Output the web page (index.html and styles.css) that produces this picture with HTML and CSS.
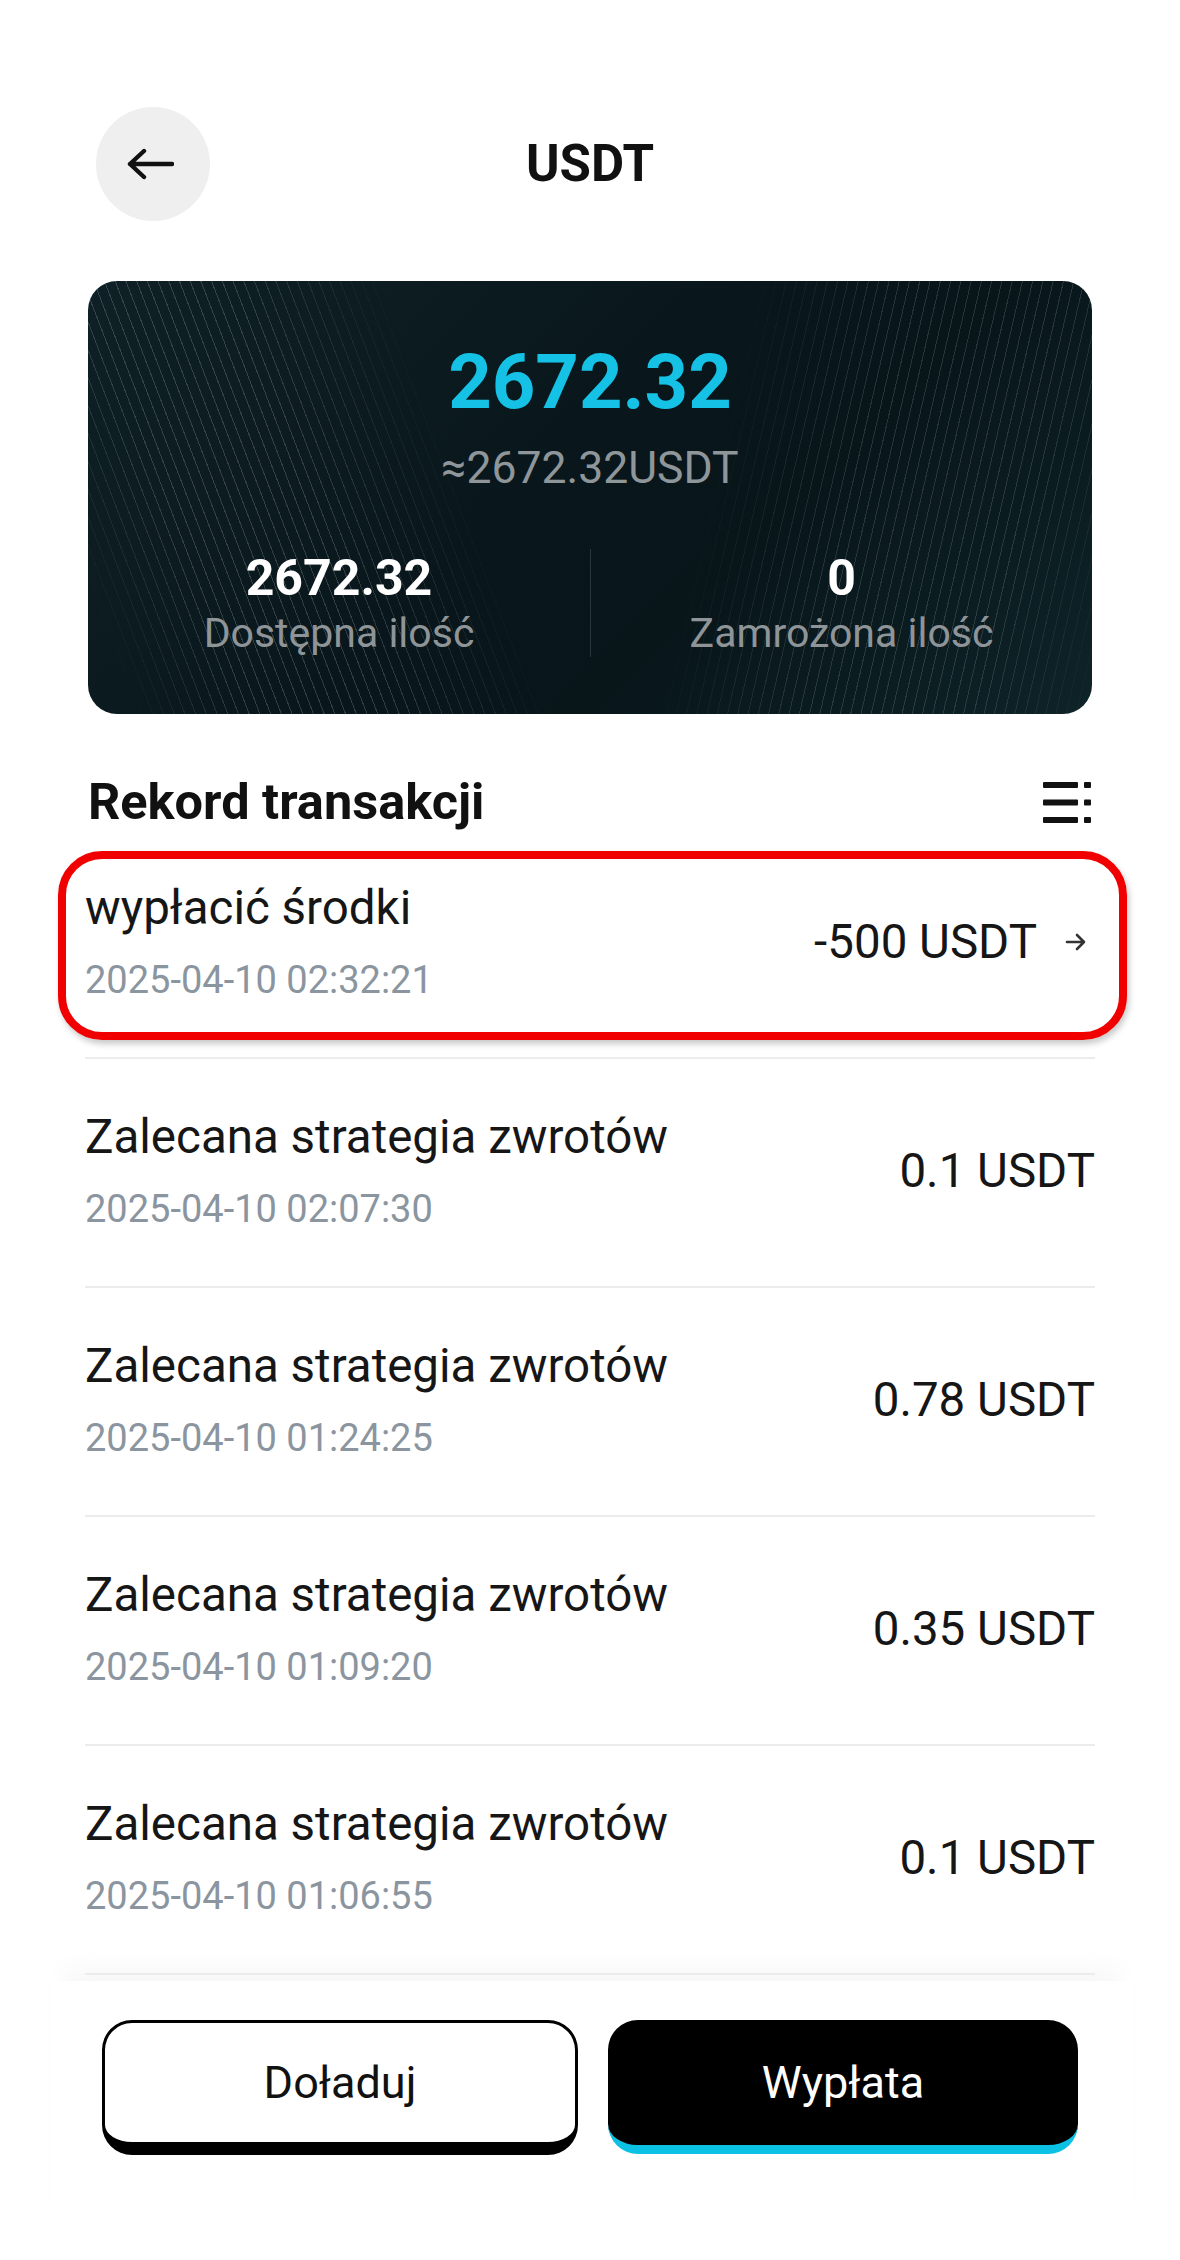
FILE: index.html
```html
<!DOCTYPE html>
<html lang="pl">
<head>
    <meta charset="UTF-8">
    <meta name="viewport" content="width=device-width, initial-scale=1.0">
    <title>USDT</title>
    <link rel="stylesheet" href="styles.css">
</head>
<body>

    <header class="top-bar">
        <button class="back-btn" aria-label="Wstecz">
            <svg width="48" height="32" viewBox="0 0 48 32">
                <path d="M46 16H4M18 3L4 16l14 13" fill="none" stroke="#111" stroke-width="4.4" stroke-linecap="round" stroke-linejoin="round"/>
            </svg>
        </button>
        <h1 class="page-title">USDT</h1>
        <span></span>
    </header>

    <section class="balance-card">
        <div class="balance-main">2672.32</div>
        <div class="balance-sub">≈2672.32USDT</div>
        <div class="balance-stats">
            <div class="stat">
                <div class="stat-value">2672.32</div>
                <div class="stat-label">Dostępna ilość</div>
            </div>
            <div class="stat stat-split">
                <div class="stat-value">0</div>
                <div class="stat-label">Zamrożona ilość</div>
            </div>
        </div>
    </section>

    <div class="section-head">
        <h2>Rekord transakcji</h2>
        <svg class="filter-icon" width="48" height="41" viewBox="0 0 48 41">
            <rect x="0" y="0" width="35" height="6" rx="1"/>
            <rect x="41" y="0" width="7" height="6" rx="1"/>
            <rect x="0" y="17.5" width="35" height="6" rx="1"/>
            <rect x="41" y="17.5" width="7" height="6" rx="1"/>
            <rect x="0" y="35" width="35" height="6" rx="1"/>
            <rect x="41" y="35" width="7" height="6" rx="1"/>
        </svg>
    </div>

    <ul class="tx-list">
        <li class="tx-row highlighted">
            <div class="tx-info">
                <div class="tx-title">wypłacić środki</div>
                <div class="tx-date">2025-04-10 02:32:21</div>
            </div>
            <div class="tx-amount">
                -500 USDT
                <svg width="22" height="18" viewBox="0 0 22 18">
                    <path d="M2 9h17M12 2l7 7-7 7" fill="none" stroke="#333" stroke-width="2.6" stroke-linecap="round" stroke-linejoin="round"/>
                </svg>
            </div>
        </li>
        <li class="tx-row">
            <div class="tx-info">
                <div class="tx-title">Zalecana strategia zwrotów</div>
                <div class="tx-date">2025-04-10 02:07:30</div>
            </div>
            <div class="tx-amount">0.1 USDT</div>
        </li>
        <li class="tx-row">
            <div class="tx-info">
                <div class="tx-title">Zalecana strategia zwrotów</div>
                <div class="tx-date">2025-04-10 01:24:25</div>
            </div>
            <div class="tx-amount">0.78 USDT</div>
        </li>
        <li class="tx-row">
            <div class="tx-info">
                <div class="tx-title">Zalecana strategia zwrotów</div>
                <div class="tx-date">2025-04-10 01:09:20</div>
            </div>
            <div class="tx-amount">0.35 USDT</div>
        </li>
        <li class="tx-row">
            <div class="tx-info">
                <div class="tx-title">Zalecana strategia zwrotów</div>
                <div class="tx-date">2025-04-10 01:06:55</div>
            </div>
            <div class="tx-amount">0.1 USDT</div>
        </li>
    </ul>

    <footer class="actions">
        <button class="btn btn-light">Doładuj</button>
        <button class="btn btn-dark">Wypłata</button>
    </footer>

</body>
</html>
```

FILE: styles.css
```css
body {
    margin: 0;
    background: #fff;
    font-family: 'Roboto', 'Noto Sans', sans-serif;
    color: #161616;
}
h1, h2 {
    margin: 0;
}
.top-bar {
    display: grid;
    grid-template-columns: 114px 1fr 114px;
    align-items: center;
    margin: 0 96px;
    padding-top: 107px;
}
.back-btn {
    width: 114px;
    height: 114px;
    border: none;
    border-radius: 50%;
    background: #efefef;
    display: flex;
    align-items: center;
    justify-content: center;
    padding: 0 6px 0 0;
    cursor: pointer;
}
.page-title {
    text-align: center;
    font-size: 51px;
    font-weight: 700;
    color: #111;
    line-height: 56px;
}
.balance-card {
    position: relative;
    overflow: hidden;
    margin: 60px 88px 0;
    height: 433px;
    box-sizing: border-box;
    padding-top: 57px;
    border-radius: 29px;
    background: linear-gradient(135deg, #0f2126 0%, #09171c 45%, #08161a 65%, #0e2328 100%);
    text-align: center;
}
.balance-card::before,
.balance-card::after {
    content: "";
    position: absolute;
    inset: 0;
    pointer-events: none;
}
.balance-card::before {
    background: repeating-linear-gradient(69deg, rgba(255, 255, 255, 0.17) 0 1px, transparent 1px 10px);
    -webkit-mask-image: linear-gradient(69deg, transparent 4%, #000 14%, #000 26%, transparent 40%);
    mask-image: linear-gradient(69deg, transparent 4%, #000 14%, #000 26%, transparent 40%);
}
.balance-card::after {
    background: repeating-linear-gradient(103deg, rgba(255, 255, 255, 0.13) 0 1px, transparent 1px 10px);
    -webkit-mask-image: linear-gradient(103deg, transparent 60%, #000 74%, #000 90%, transparent 100%);
    mask-image: linear-gradient(103deg, transparent 60%, #000 74%, #000 90%, transparent 100%);
}
.balance-main {
    position: relative;
    z-index: 1;
    font-size: 76px;
    font-weight: 700;
    line-height: 88px;
    color: #15c2e6;
}
.balance-sub {
    position: relative;
    z-index: 1;
    margin-top: 17px;
    font-size: 44.5px;
    line-height: 50px;
    color: #8f969a;
}
.balance-stats {
    position: relative;
    z-index: 1;
    display: grid;
    grid-template-columns: 1fr 1fr;
    margin-top: 56px;
}
.stat-split {
    border-left: 1px solid rgba(255, 255, 255, 0.14);
}
.stat-value {
    font-size: 50px;
    font-weight: 700;
    line-height: 58px;
    color: #fff;
}
.stat-label {
    margin-top: 2px;
    font-size: 41px;
    line-height: 48px;
    color: #8e9497;
}
.section-head {
    display: flex;
    justify-content: space-between;
    align-items: center;
    margin: 60px 89px 0 88px;
    height: 56px;
}
.section-head h2 {
    font-size: 50.5px;
    font-weight: 700;
    line-height: 56px;
    color: #111;
}
.filter-icon {
    fill: #111;
}
.tx-list {
    list-style: none;
    margin: 0 85px;
    padding: 0;
}
.tx-row {
    position: relative;
    display: flex;
    justify-content: space-between;
    align-items: center;
    padding: 51px 0 55px;
    border-bottom: 2px solid #ececee;
}
.tx-title {
    font-size: 47.5px;
    line-height: 54px;
    color: #161616;
}
.tx-date {
    margin-top: 23px;
    font-size: 38px;
    line-height: 44px;
    color: #8b95a0;
}
.tx-amount {
    display: flex;
    align-items: center;
    gap: 28px;
    font-size: 47.5px;
    line-height: 54px;
    color: #161616;
}
.highlighted .tx-amount {
    padding-right: 8px;
}
.highlighted::after {
    content: "";
    position: absolute;
    top: 21px;
    bottom: 17px;
    left: -27px;
    right: -32px;
    border: 8px solid #f00000;
    border-radius: 44px;
    box-shadow: 2px 4px 6px rgba(0, 0, 0, 0.22);
}
.actions {
    display: flex;
    align-items: flex-start;
    gap: 30px;
    margin: 6px 46px 0 50px;
    padding: 39px 56px 100px 52px;
    box-shadow: 0 -26px 26px -14px rgba(0, 0, 0, 0.035);
}
.btn {
    flex: 1;
    box-sizing: border-box;
    height: 135px;
    border-radius: 30px;
    font-family: 'Roboto', sans-serif;
    font-size: 45px;
    cursor: pointer;
}
.btn-light {
    background: #fff;
    color: #111;
    border: 3px solid #000;
    border-bottom-width: 13px;
}
.btn-dark {
    background: #000;
    color: #fff;
    border: none;
    border-bottom: 9px solid #0cc2e4;
    height: 134px;
    padding-top: 0;
}
```
